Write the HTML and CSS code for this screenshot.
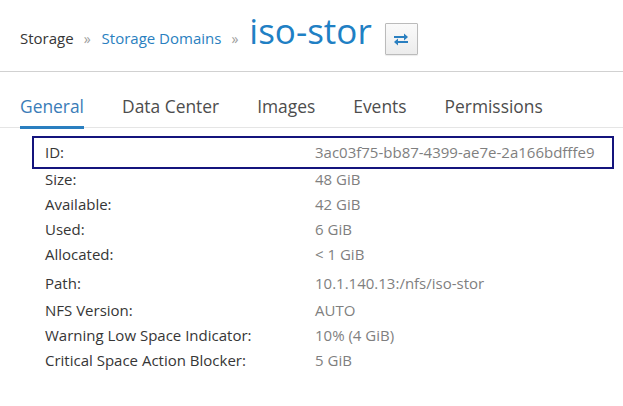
FILE: index.html
```html
<!DOCTYPE html>
<html>
<head>
<meta charset="utf-8">
<link rel="stylesheet" href="styles.css">
</head>
<body>
<header class="header">
  <span class="crumb">Storage</span>
  <span class="sep">»</span>
  <a class="crumb link">Storage Domains</a>
  <span class="sep">»</span>
  <h1 class="title">iso-stor</h1>
  <button class="switch" type="button" aria-label="Switch">
    <svg width="16" height="14" viewBox="0 0 16 14">
      <path d="M1 5H12" stroke="#2a7fc0" stroke-width="2" fill="none"/>
      <polygon points="11,1.5 15,5 11,8.5" fill="#2a7fc0"/>
      <path d="M4 10H15" stroke="#2a7fc0" stroke-width="2" fill="none"/>
      <polygon points="5,6.5 1,10 5,13.5" fill="#2a7fc0"/>
    </svg>
  </button>
</header>
<nav class="tabs">
  <a class="tab active">General</a>
  <a class="tab">Data Center</a>
  <a class="tab">Images</a>
  <a class="tab">Events</a>
  <a class="tab">Permissions</a>
</nav>
<section class="details">
  <div class="row id-row"><span class="label">ID:</span><span class="value">3ac03f75-bb87-4399-ae7e-2a166bdfffe9</span></div>
  <div class="row"><span class="label">Size:</span><span class="value">48 GiB</span></div>
  <div class="row"><span class="label">Available:</span><span class="value">42 GiB</span></div>
  <div class="row"><span class="label">Used:</span><span class="value">6 GiB</span></div>
  <div class="row"><span class="label">Allocated:</span><span class="value">&lt; 1 GiB</span></div>
  <div class="row gap-lg"><span class="label">Path:</span><span class="value">10.1.140.13:/nfs/iso-stor</span></div>
  <div class="row gap-sm"><span class="label">NFS Version:</span><span class="value">AUTO</span></div>
  <div class="row"><span class="label">Warning Low Space Indicator:</span><span class="value">10% (4 GiB)</span></div>
  <div class="row"><span class="label">Critical Space Action Blocker:</span><span class="value">5 GiB</span></div>
</section>
</body>
</html>
```
FILE: styles.css
```css
html, body {
  margin: 0;
  padding: 0;
  background: #fff;
}
body {
  font-family: "Open Sans", "Noto Sans", sans-serif;
  color: #363636;
  width: 623px;
  height: 406px;
  overflow: hidden;
}
.header {
  display: flex;
  align-items: baseline;
  height: 72px;
  box-sizing: border-box;
  padding: 6px 0 0 20px;
  border-bottom: 1px solid #d1d1d1;
}
.crumb {
  font-size: 15px;
  color: #363636;
}
.crumb.link {
  color: #2a7fc0;
}
.sep {
  font-size: 14px;
  color: #9c9c9c;
  margin: 0 11px 0 10px;
}
.title {
  margin: 0;
  font-size: 35px;
  font-weight: 400;
  line-height: 50px;
  color: #1f80c4;
}
.switch {
  align-self: center;
  margin: 0 0 0 13px;
  width: 33px;
  height: 32px;
  display: flex;
  align-items: center;
  justify-content: center;
  padding: 0;
  border: 1px solid #bbb;
  border-radius: 1px;
  background: linear-gradient(#fafafa, #ececec);
  box-shadow: 0 1px 1px rgba(0,0,0,0.08);
}
.tabs {
  display: flex;
  gap: 38px;
  padding: 0 20px;
  margin-top: 18px;
  border-bottom: 1px solid #e5e5e5;
  height: 38px;
  box-sizing: border-box;
}
.tab {
  font-size: 17.4px;
  line-height: 32px;
  color: #4d4d4d;
  height: 38px;
  box-sizing: border-box;
}
.tab.active {
  color: #3a7cb8;
  border-bottom: 3px solid #2a7fc0;
  margin-bottom: -1px;
  height: 39px;
}
.details {
  padding: 8px 9px 0 32px;
}
.row {
  display: flex;
  font-size: 15px;
  line-height: 25px;
  padding-left: 13px;
}
.id-row {
  border: 2px solid #14147d;
  padding-left: 11px;
  line-height: 29px;
  margin-bottom: -2px;
}
.label {
  width: 270px;
  flex: none;
  color: #363636;
}
.value {
  color: #7f7f7f;
}
.gap-lg {
  margin-top: 4px;
}
.gap-sm {
  margin-top: 2px;
}
```
